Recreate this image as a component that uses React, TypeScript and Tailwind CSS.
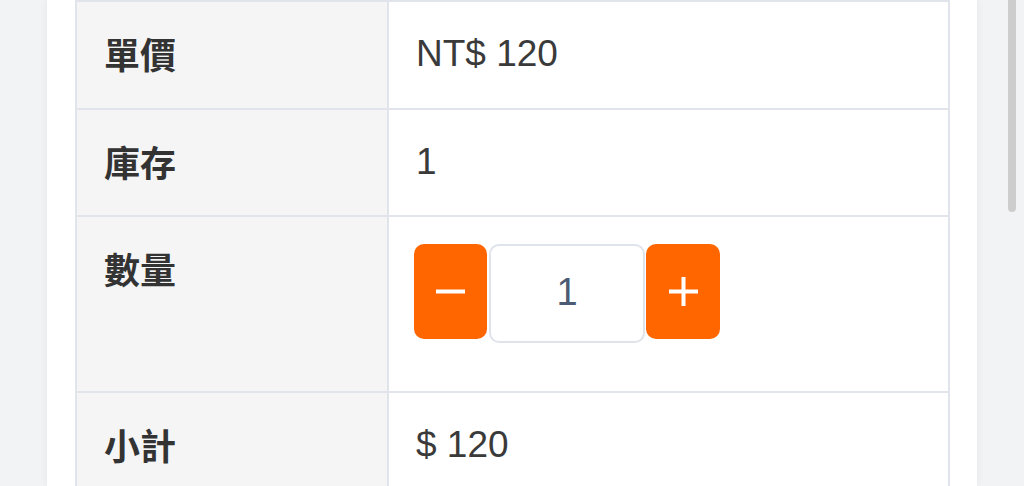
import React from "react";

const labelCls =
  "bg-[#f5f5f6] border-2 border-[#e2e4ec] w-[312px] px-[27px] align-top text-left font-bold text-[36px] leading-[54px] text-[#333333]";
const valueCls =
  "bg-white border-2 border-[#e2e4ec] px-[27px] align-top text-left text-[37px] leading-[54px] text-[#3a3a3a]";

export default function App() {
  return (
    <div
      className="relative w-[1024px] h-[486px] overflow-hidden bg-[#f2f3f5] flex justify-center"
      style={{ fontFamily: '"Liberation Sans", "Noto Sans CJK TC", sans-serif' }}
    >
      <div className="w-[930px] h-full bg-white shadow-[0_0_8px_rgba(0,0,0,0.06)] px-[28px]">
        <table className="w-[875px] border-collapse">
          <tbody>
            <tr className="h-[108px]">
              <th className={labelCls + " pt-[24px]"} style={{ fontFamily: '"Noto Sans CJK TC", sans-serif' }}>
                單價
              </th>
              <td className={valueCls + " pt-[25px]"}>NT$ 120</td>
            </tr>
            <tr className="h-[107px]">
              <th className={labelCls + " pt-[24px]"} style={{ fontFamily: '"Noto Sans CJK TC", sans-serif' }}>
                庫存
              </th>
              <td className={valueCls + " pt-[25px]"}>1</td>
            </tr>
            <tr className="h-[176px]">
              <th className={labelCls + " pt-[24px]"} style={{ fontFamily: '"Noto Sans CJK TC", sans-serif' }}>
                數量
              </th>
              <td className={valueCls + " pt-[27px]"}>
                <div className="flex items-start -ml-[2px]">
                  <button className="w-[73px] h-[95px] rounded-[10px] bg-[#ff6600] flex items-center justify-center">
                    <svg width="29" height="29" viewBox="0 0 29 29">
                      <rect x="0" y="12.5" width="29" height="4" fill="#ffffff" />
                    </svg>
                  </button>
                  <div className="ml-[2px] w-[156px] h-[99px] rounded-[10px] border-2 border-[#dfe3ea] bg-white flex items-center justify-center text-[38px] text-[#4a5b73] pb-[4px]">
                    1
                  </div>
                  <button className="ml-[1px] w-[74px] h-[95px] rounded-[10px] bg-[#ff6600] flex items-center justify-center">
                    <svg width="29" height="29" viewBox="0 0 29 29">
                      <rect x="0" y="12.5" width="29" height="4" fill="#ffffff" />
                      <rect x="12.5" y="0" width="4" height="29" fill="#ffffff" />
                    </svg>
                  </button>
                </div>
              </td>
            </tr>
            <tr className="h-[120px]">
              <th className={labelCls + " pt-[24px]"} style={{ fontFamily: '"Noto Sans CJK TC", sans-serif' }}>
                小計
              </th>
              <td className={valueCls + " pt-[25px]"}>$ 120</td>
            </tr>
          </tbody>
        </table>
      </div>
      <div className="absolute right-[8px] top-0 w-[8px] h-[212px] rounded-b-full bg-[#cdcdcd]" />
    </div>
  );
}
